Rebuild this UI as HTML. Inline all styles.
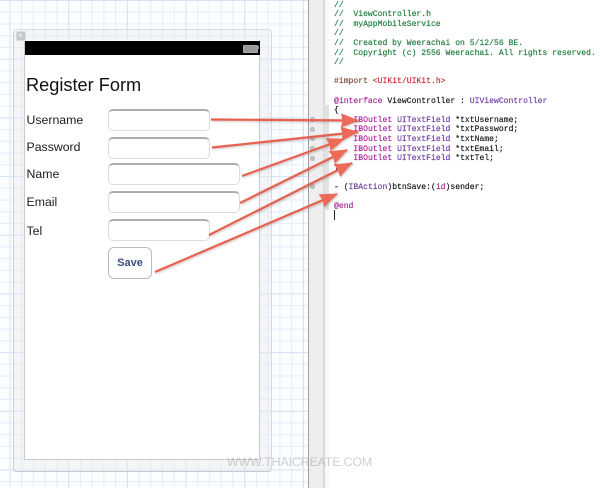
<!DOCTYPE html>
<html><head><meta charset="utf-8">
<style>
html,body{margin:0;padding:0;background:#fff}
#p{position:relative;width:600px;height:488px;overflow:hidden;background:#fff;font-family:"Liberation Sans",sans-serif;filter:blur(.3px)}
#grid{position:absolute;left:0;top:0;width:308px;height:488px;background-color:#fbfdff;
background-image:
linear-gradient(90deg,#d6e3f5 1px,transparent 1px),
linear-gradient(#d6e3f5 1px,transparent 1px),
linear-gradient(90deg,#e4edf9 1px,transparent 1px),
linear-gradient(#e4edf9 1px,transparent 1px);
background-size:58.7px 100%,100% 58.7px,11.74px 100%,100% 11.74px;
background-position:9.5px 0,0 0,9.5px 0,0 0}
.abs{position:absolute}
#frame{left:13px;top:29px;width:257px;height:441px;border:1px solid #d8dadf;border-bottom-color:#c6c9d0;border-left-color:#cfd1d6;border-radius:3px;background:rgba(232,233,236,.42);box-sizing:content-box}
#view{left:24px;top:40px;width:236px;height:420px;background:#fff;border:1px solid #c8cacd;box-sizing:border-box;border-top:0}
#bar{left:25px;top:41px;width:235px;height:14px;background:#000}
.l{position:absolute;left:26.5px;font-size:12.3px;line-height:14px;color:#1c1c1c;white-space:nowrap}
.tf{position:absolute;left:108px;height:22px;box-sizing:border-box;background:#fff;border:1px solid #dcdcdc;border-top:2px solid #adadad;border-radius:5px}
#code{left:334px;top:.7px;font-family:"Liberation Mono",monospace;font-size:8.08px;line-height:9.6px;color:#111;white-space:pre;font-weight:normal;-webkit-text-stroke:.15px currentColor}
.c{color:#1d7a3c}.k{color:#a8259b}.t{color:#6f3da0}.s{color:#c5262e}.m{color:#7b4a3a}
.d{position:absolute;left:310px;width:5px;height:5px;border-radius:50%;background:#c4c4c4;box-sizing:border-box;border:1px solid #b5b5b5}
</style></head>
<body><div id="p">
<div id="grid"></div>
<div class="abs" style="left:308px;top:0;width:1px;height:488px;background:#a0a0a0"></div>
<div class="abs" style="left:309px;top:0;width:14px;height:488px;background:#eeeeee"></div>
<div class="abs" style="left:323px;top:0;width:2px;height:488px;background:#dadada"></div>
<div class="abs" style="left:325px;top:0;width:4px;height:488px;background:#f8f8f8"></div>
<div class="abs" style="left:324px;top:105px;width:5px;height:105px;background:#e2e2e2"></div>

<div class="abs" id="frame"></div>
<div class="abs" id="view"></div>
<div class="abs" id="bar"></div>
<div class="abs" style="left:15.5px;top:31px;width:8px;height:8px;background:#c3c7cc;border:1px solid #d8dade;border-radius:2px;color:#fff;font-size:8px;line-height:8px;text-align:center">×</div>
<div class="abs" style="left:243px;top:44.5px;width:13px;height:6px;background:#999;border:1px solid #aaa;border-radius:1px"></div>
<div class="abs" style="left:258px;top:46px;width:1px;height:3px;background:#888"></div>

<div class="abs" style="left:26px;top:74px;font-size:18.2px;line-height:22px;color:#111;white-space:nowrap">Register Form</div>
<div class="l" style="top:113px">Username</div>
<div class="l" style="top:140px">Password</div>
<div class="l" style="top:167px">Name</div>
<div class="l" style="top:195px">Email</div>
<div class="l" style="top:223.5px">Tel</div>
<div class="tf" style="top:109px;width:102px"></div>
<div class="tf" style="top:137px;width:102px"></div>
<div class="tf" style="top:163px;width:132px"></div>
<div class="tf" style="top:191px;width:132px"></div>
<div class="tf" style="top:219px;width:102px"></div>
<div class="abs" style="left:108px;top:247px;width:44px;height:32px;box-sizing:border-box;border:1px solid #b9bcc3;border-radius:6px;background:#fff;color:#3a4f80;font-weight:bold;font-size:11px;line-height:31px;text-align:center">Save</div>

<div class="d" style="top:117px"></div>
<div class="d" style="top:127px"></div>
<div class="d" style="top:136px"></div>
<div class="d" style="top:146px"></div>
<div class="d" style="top:156px"></div>
<div class="d" style="top:184px"></div>

<div class="abs" id="code"><span class="c">//
//  ViewController.h
//  myAppMobileService
//
//  Created by Weerachai on 5/12/56 BE.
//  Copyright (c) 2556 Weerachai. All rights reserved.
//</span>

<span class="m">#import</span> <span class="s">&lt;UIKit/UIKit.h&gt;</span>

<span class="k">@interface</span> ViewController : <span class="t">UIViewController</span>
{
    <span class="k">IBOutlet</span> <span class="t">UITextField</span> *txtUsername;
    <span class="k">IBOutlet</span> <span class="t">UITextField</span> *txtPassword;
    <span class="k">IBOutlet</span> <span class="t">UITextField</span> *txtName;
    <span class="k">IBOutlet</span> <span class="t">UITextField</span> *txtEmail;
    <span class="k">IBOutlet</span> <span class="t">UITextField</span> *txtTel;
}

- (<span class="t">IBAction</span>)btnSave:(<span class="k">id</span>)sender;

<span class="k">@end</span></div>
<div class="abs" style="left:334px;top:210px;width:1px;height:10px;background:#222"></div>

<svg class="abs" style="left:0;top:0;filter:drop-shadow(1px 1px 1px rgba(90,60,60,.3))" width="600" height="488" viewBox="0 0 600 488">
<defs><marker id="a" markerUnits="userSpaceOnUse" markerWidth="20" markerHeight="16" refX="17" refY="7" orient="auto"><path d="M0 0L18 7L0 14L1.5 7Z" fill="#ee6a58"/></marker></defs>
<g stroke="#e8604f" stroke-width="2.2" fill="none">
<line x1="211" y1="119.5" x2="358" y2="120.5" marker-end="url(#a)"/>
<line x1="212" y1="147.5" x2="358" y2="132" marker-end="url(#a)"/>
<line x1="242" y1="176" x2="344" y2="139" marker-end="url(#a)"/>
<line x1="240" y1="203" x2="347" y2="150" marker-end="url(#a)"/>
<line x1="209" y1="235" x2="352" y2="163" marker-end="url(#a)"/>
<line x1="155" y1="272" x2="337" y2="194" marker-end="url(#a)"/>
</g></svg>

<div class="abs" style="left:227px;top:454.5px;font-size:12.4px;line-height:15px;color:rgba(160,160,160,.5);white-space:nowrap;letter-spacing:-.15px">WWW.THAICREATE.COM</div>
</div></body></html>
